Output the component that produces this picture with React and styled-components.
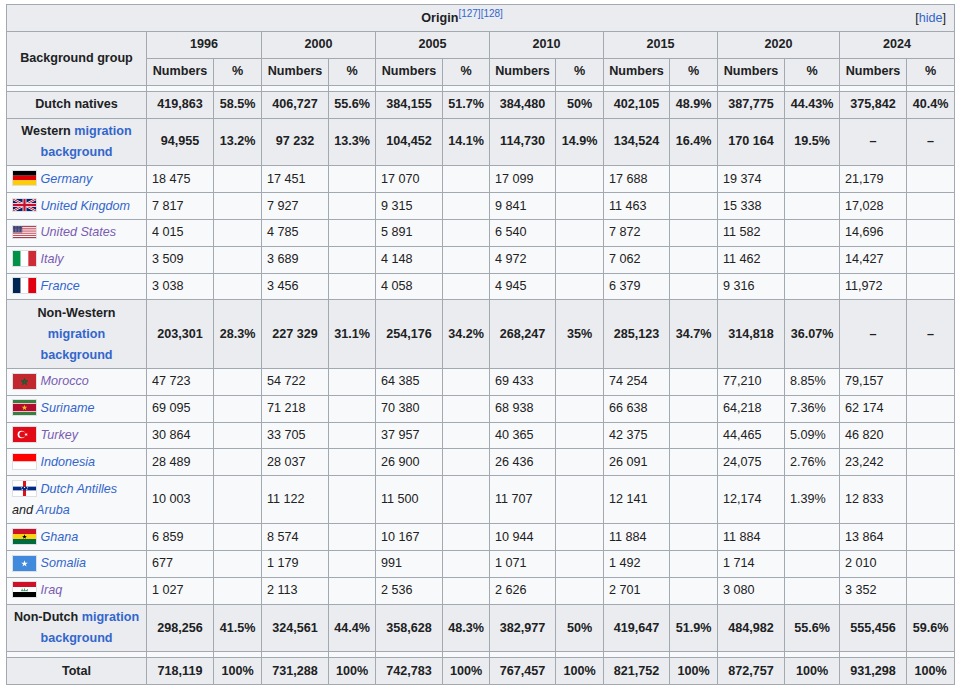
import React from 'react';
import styled, { createGlobalStyle, css } from 'styled-components';

const GlobalStyle = createGlobalStyle`
  html, body { margin: 0; padding: 0; background: #ffffff; }
  body { font-family: "Liberation Sans", Arial, sans-serif; }
`;

const Page = styled.div`
  padding: 4px 6px;
`;

const Table = styled.table`
  border-collapse: collapse;
  table-layout: fixed;
  width: 948px;
  font-size: 12.6px;
  line-height: 20.8px;
  color: #202122;
  background: #f8f9fa;
  border: 1px solid #a2a9b1;
`;

const Col = styled.col`
  width: ${(p) => p.$w}px;
`;

const cellBase = css`
  border: 1px solid #a2a9b1;
  padding: 2.54px 5px;
  vertical-align: middle;
`;

const Th = styled.th`
  ${cellBase}
  background: #eaecf0;
  font-weight: bold;
  text-align: center;
`;

const Td = styled.td`
  ${cellBase}
  text-align: left;
`;

const SpacerCell = styled.td`
  border: 1px solid #a2a9b1;
  padding: 2.54px 0;
`;

const Toggle = styled.span`
  float: right;
  font-weight: normal;
  margin: 0 3px 0 3px;
`;

const Link = styled.a`
  color: ${(p) => (p.$visited ? '#795cb2' : '#3366cc')};
  text-decoration: none;
`;

const Sup = styled.sup`
  font-size: 10px;
  line-height: 1;
  font-weight: normal;
  vertical-align: super;
`;

const Name = styled.i`
  font-style: italic;
`;

const FlagSvg = styled.svg`
  display: inline-block;
  vertical-align: middle;
  border: 1px solid #dcdfe3;
  margin-top: -2px;
`;

const starPts = (cx, cy, r, inner = 0.382) => {
  const pts = [];
  for (let i = 0; i < 10; i++) {
    const rad = i % 2 === 0 ? r : r * inner;
    const a = -Math.PI / 2 + (i * Math.PI) / 5;
    pts.push(`${(cx + rad * Math.cos(a)).toFixed(2)},${(cy + rad * Math.sin(a)).toFixed(2)}`);
  }
  return pts.join(' ');
};

const pentagram = (cx, cy, r) => {
  const pts = [];
  for (let k = 0; k < 5; k++) {
    const a = -Math.PI / 2 + (k * 4 * Math.PI) / 5;
    pts.push(`${(cx + r * Math.cos(a)).toFixed(2)},${(cy + r * Math.sin(a)).toFixed(2)}`);
  }
  return pts.join(' ');
};

const Flag = ({ kind }) => {
  switch (kind) {
    case 'de':
      return (
        <FlagSvg width="23" height="14" viewBox="0 0 5 3" preserveAspectRatio="none">
          <rect width="5" height="1" fill="#000000" />
          <rect y="1" width="5" height="1" fill="#dd0000" />
          <rect y="2" width="5" height="1" fill="#ffce00" />
        </FlagSvg>
      );
    case 'uk':
      return (
        <FlagSvg width="23" height="12" viewBox="0 0 60 30" preserveAspectRatio="none">
          <rect width="60" height="30" fill="#012169" />
          <path d="M0,0 L60,30 M60,0 L0,30" stroke="#ffffff" strokeWidth="6" />
          <path d="M0,0 L60,30 M60,0 L0,30" stroke="#c8102e" strokeWidth="2.5" />
          <path d="M30,0 V30 M0,15 H60" stroke="#ffffff" strokeWidth="10" />
          <path d="M30,0 V30 M0,15 H60" stroke="#c8102e" strokeWidth="6" />
        </FlagSvg>
      );
    case 'us': {
      const stripes = [];
      for (let i = 0; i < 13; i++) {
        stripes.push(
          <rect key={i} y={(i * 100) / 13} width="190" height={100 / 13 + 0.1} fill={i % 2 === 0 ? '#b22234' : '#ffffff'} />
        );
      }
      const stars = [];
      for (let r = 0; r < 5; r++) {
        for (let c = 0; c < 6; c++) {
          stars.push(<circle key={`${r}-${c}`} cx={7 + c * 12.5} cy={6 + r * 10.5} r="2.6" fill="#ffffff" />);
        }
      }
      return (
        <FlagSvg width="23" height="12" viewBox="0 0 190 100" preserveAspectRatio="none">
          {stripes}
          <rect width="76" height="53.85" fill="#3c3b6e" />
          {stars}
        </FlagSvg>
      );
    }
    case 'it':
      return (
        <FlagSvg width="23" height="15" viewBox="0 0 3 2" preserveAspectRatio="none">
          <rect width="1" height="2" fill="#009246" />
          <rect x="1" width="1" height="2" fill="#ffffff" />
          <rect x="2" width="1" height="2" fill="#ce2b37" />
        </FlagSvg>
      );
    case 'fr':
      return (
        <FlagSvg width="23" height="15" viewBox="0 0 3 2" preserveAspectRatio="none">
          <rect width="1" height="2" fill="#002654" />
          <rect x="1" width="1" height="2" fill="#ffffff" />
          <rect x="2" width="1" height="2" fill="#e1000f" />
        </FlagSvg>
      );
    case 'ma':
      return (
        <FlagSvg width="23" height="15" viewBox="0 0 30 20" preserveAspectRatio="none">
          <rect width="30" height="20" fill="#c1272d" />
          <polygon points={pentagram(15, 10.5, 4.6)} fill="none" stroke="#006233" strokeWidth="1.1" />
        </FlagSvg>
      );
    case 'sr':
      return (
        <FlagSvg width="23" height="15" viewBox="0 0 30 20" preserveAspectRatio="none">
          <rect width="30" height="20" fill="#377e3f" />
          <rect y="4" width="30" height="12" fill="#ffffff" />
          <rect y="5" width="30" height="10" fill="#b40a2d" />
          <polygon points={starPts(15, 10.3, 4)} fill="#ecc81d" />
        </FlagSvg>
      );
    case 'tr':
      return (
        <FlagSvg width="23" height="15" viewBox="0 0 30 20" preserveAspectRatio="none">
          <rect width="30" height="20" fill="#e30a17" />
          <circle cx="11" cy="10" r="5" fill="#ffffff" />
          <circle cx="12.25" cy="10" r="4" fill="#e30a17" />
          <polygon points={starPts(17.2, 10, 2.5)} fill="#ffffff" transform="rotate(-18 17.2 10)" />
        </FlagSvg>
      );
    case 'id':
      return (
        <FlagSvg width="23" height="15" viewBox="0 0 30 20" preserveAspectRatio="none">
          <rect width="30" height="10" fill="#ff0000" />
          <rect y="10" width="30" height="10" fill="#ffffff" />
        </FlagSvg>
      );
    case 'an':
      return (
        <FlagSvg width="23" height="15" viewBox="0 0 30 20" preserveAspectRatio="none">
          <rect width="30" height="20" fill="#ffffff" />
          <rect x="13" width="4" height="20" fill="#da121a" />
          <rect y="7.5" width="30" height="5" fill="#012a87" />
          <circle cx="11" cy="9" r="0.8" fill="#ffffff" />
          <circle cx="19" cy="9" r="0.8" fill="#ffffff" />
          <circle cx="12" cy="11.3" r="0.8" fill="#ffffff" />
          <circle cx="18" cy="11.3" r="0.8" fill="#ffffff" />
          <circle cx="15" cy="8.6" r="0.8" fill="#ffffff" />
        </FlagSvg>
      );
    case 'gh':
      return (
        <FlagSvg width="23" height="15" viewBox="0 0 30 20" preserveAspectRatio="none">
          <rect width="30" height="6.67" fill="#ce1126" />
          <rect y="6.67" width="30" height="6.67" fill="#fcd116" />
          <rect y="13.33" width="30" height="6.67" fill="#006b3f" />
          <polygon points={starPts(15, 10.3, 3.4)} fill="#000000" />
        </FlagSvg>
      );
    case 'so':
      return (
        <FlagSvg width="23" height="15" viewBox="0 0 30 20" preserveAspectRatio="none">
          <rect width="30" height="20" fill="#4189dd" />
          <polygon points={starPts(15, 10.4, 4.6)} fill="#ffffff" />
        </FlagSvg>
      );
    case 'iq':
      return (
        <FlagSvg width="23" height="15" viewBox="0 0 30 20" preserveAspectRatio="none">
          <rect width="30" height="6.67" fill="#ce1126" />
          <rect y="6.67" width="30" height="6.67" fill="#ffffff" />
          <rect y="13.33" width="30" height="6.67" fill="#000000" />
          <path d="M10.5,11.6 H19.5 M12,11.6 V9 M15,11.6 V8.6 M17.5,11.6 q1,-2 2,-1.5" stroke="#007a3d" strokeWidth="0.9" fill="none" />
        </FlagSvg>
      );
    default:
      return null;
  }
};

const colWidths = [140, 67, 48, 67, 47, 67, 47, 66, 48, 66, 48, 67, 55, 67, 48];
const years = ['1996', '2000', '2005', '2010', '2015', '2020', '2024'];

const MigrationLink = () => (
  <>
    <Link href="#">migration</Link> <Link href="#">background</Link>
  </>
);

const rows = [
  { type: 'spacer' },
  {
    type: 'group',
    label: 'Dutch natives',
    values: ['419,863', '58.5%', '406,727', '55.6%', '384,155', '51.7%', '384,480', '50%', '402,105', '48.9%', '387,775', '44.43%', '375,842', '40.4%'],
  },
  {
    type: 'group',
    label: (
      <>
        Western <MigrationLink />
      </>
    ),
    values: ['94,955', '13.2%', '97 232', '13.3%', '104,452', '14.1%', '114,730', '14.9%', '134,524', '16.4%', '170 164', '19.5%', '–', '–'],
  },
  { type: 'country', flag: 'de', name: 'Germany', values: ['18 475', '', '17 451', '', '17 070', '', '17 099', '', '17 688', '', '19 374', '', '21,179', ''] },
  { type: 'country', flag: 'uk', name: 'United Kingdom', values: ['7 817', '', '7 927', '', '9 315', '', '9 841', '', '11 463', '', '15 338', '', '17,028', ''] },
  { type: 'country', flag: 'us', name: 'United States', visited: true, values: ['4 015', '', '4 785', '', '5 891', '', '6 540', '', '7 872', '', '11 582', '', '14,696', ''] },
  { type: 'country', flag: 'it', name: 'Italy', visited: true, values: ['3 509', '', '3 689', '', '4 148', '', '4 972', '', '7 062', '', '11 462', '', '14,427', ''] },
  { type: 'country', flag: 'fr', name: 'France', values: ['3 038', '', '3 456', '', '4 058', '', '4 945', '', '6 379', '', '9 316', '', '11,972', ''] },
  {
    type: 'group',
    label: (
      <>
        Non-Western <MigrationLink />
      </>
    ),
    values: ['203,301', '28.3%', '227 329', '31.1%', '254,176', '34.2%', '268,247', '35%', '285,123', '34.7%', '314,818', '36.07%', '–', '–'],
  },
  { type: 'country', flag: 'ma', name: 'Morocco', visited: true, values: ['47 723', '', '54 722', '', '64 385', '', '69 433', '', '74 254', '', '77,210', '8.85%', '79,157', ''] },
  { type: 'country', flag: 'sr', name: 'Suriname', values: ['69 095', '', '71 218', '', '70 380', '', '68 938', '', '66 638', '', '64,218', '7.36%', '62 174', ''] },
  { type: 'country', flag: 'tr', name: 'Turkey', visited: true, values: ['30 864', '', '33 705', '', '37 957', '', '40 365', '', '42 375', '', '44,465', '5.09%', '46 820', ''] },
  { type: 'country', flag: 'id', name: 'Indonesia', values: ['28 489', '', '28 037', '', '26 900', '', '26 436', '', '26 091', '', '24,075', '2.76%', '23,242', ''] },
  { type: 'country', flag: 'an', name: 'antilles', values: ['10 003', '', '11 122', '', '11 500', '', '11 707', '', '12 141', '', '12,174', '1.39%', '12 833', ''] },
  { type: 'country', flag: 'gh', name: 'Ghana', values: ['6 859', '', '8 574', '', '10 167', '', '10 944', '', '11 884', '', '11 884', '', '13 864', ''] },
  { type: 'country', flag: 'so', name: 'Somalia', values: ['677', '', '1 179', '', '991', '', '1 071', '', '1 492', '', '1 714', '', '2 010', ''] },
  { type: 'country', flag: 'iq', name: 'Iraq', visited: true, values: ['1 027', '', '2 113', '', '2 536', '', '2 626', '', '2 701', '', '3 080', '', '3 352', ''] },
  {
    type: 'group',
    label: (
      <>
        Non-Dutch <MigrationLink />
      </>
    ),
    values: ['298,256', '41.5%', '324,561', '44.4%', '358,628', '48.3%', '382,977', '50%', '419,647', '51.9%', '484,982', '55.6%', '555,456', '59.6%'],
  },
  { type: 'spacer' },
  {
    type: 'group',
    label: 'Total',
    values: ['718,119', '100%', '731,288', '100%', '742,783', '100%', '767,457', '100%', '821,752', '100%', '872,757', '100%', '931,298', '100%'],
  },
];

const CountryName = ({ row }) => {
  if (row.name === 'antilles') {
    return (
      <Name>
        <Link href="#">Dutch</Link> <Link href="#">Antilles</Link> and <Link href="#">Aruba</Link>
      </Name>
    );
  }
  return (
    <Name>
      <Link href="#" $visited={row.visited}>
        {row.name}
      </Link>
    </Name>
  );
};

export default function App() {
  return (
    <>
      <GlobalStyle />
      <Page>
        <Table>
          <colgroup>
            {colWidths.map((w, i) => (
              <Col key={i} $w={w} />
            ))}
          </colgroup>
          <tbody>
            <tr>
              <Th colSpan={15}>
                <Toggle>
                  [<Link href="#">hide</Link>]
                </Toggle>
                Origin
                <Sup>
                  <Link href="#">[127]</Link>
                  <Link href="#">[128]</Link>
                </Sup>
              </Th>
            </tr>
            <tr>
              <Th rowSpan={2}>Background group</Th>
              {years.map((y) => (
                <Th key={y} colSpan={2}>
                  {y}
                </Th>
              ))}
            </tr>
            <tr>
              {years.map((y) => (
                <React.Fragment key={y}>
                  <Th>Numbers</Th>
                  <Th>%</Th>
                </React.Fragment>
              ))}
            </tr>
            {rows.map((row, ri) => {
              if (row.type === 'spacer') {
                return (
                  <tr key={ri}>
                    {colWidths.map((_, ci) => (
                      <SpacerCell key={ci} />
                    ))}
                  </tr>
                );
              }
              if (row.type === 'group') {
                return (
                  <tr key={ri}>
                    <Th>{row.label}</Th>
                    {row.values.map((v, ci) => (
                      <Th key={ci}>{v}</Th>
                    ))}
                  </tr>
                );
              }
              return (
                <tr key={ri}>
                  <Td>
                    <Flag kind={row.flag} /> <CountryName row={row} />
                  </Td>
                  {row.values.map((v, ci) => (
                    <Td key={ci}>{v}</Td>
                  ))}
                </tr>
              );
            })}
          </tbody>
        </Table>
      </Page>
    </>
  );
}
